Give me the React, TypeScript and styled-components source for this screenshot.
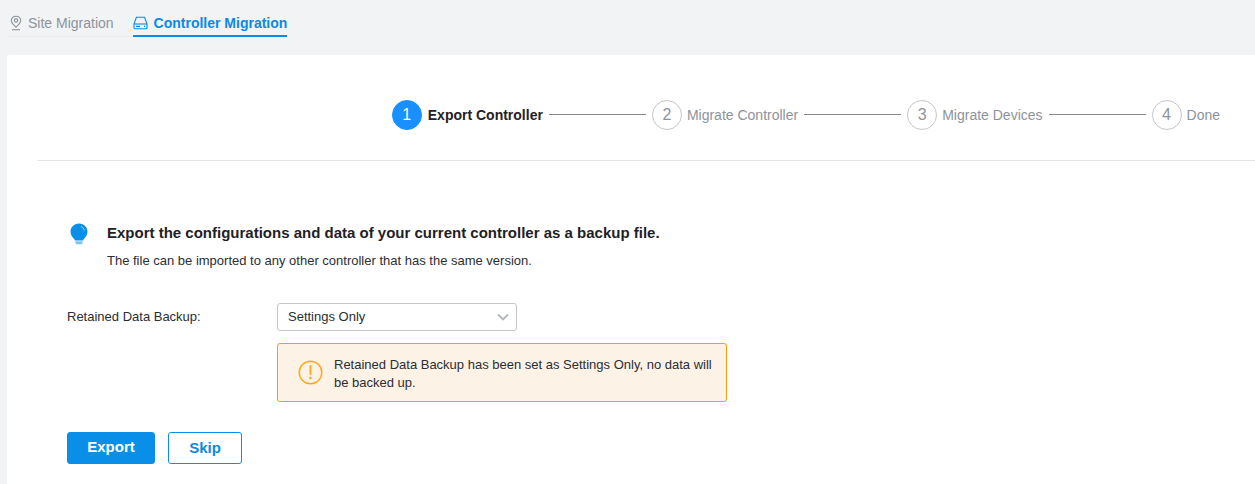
import * as React from 'react';
import styled, { createGlobalStyle } from 'styled-components';

const GlobalStyle = createGlobalStyle`
  html, body {
    margin: 0;
    padding: 0;
    height: 100%;
    overflow: hidden;
    background-color: #f1f3f5;
    font-family: "Liberation Sans", Arial, sans-serif;
  }
`;

const Page = styled.div`
  width: 1255px;
  height: 484px;
  overflow: hidden;
  padding-left: 7px;
  box-sizing: border-box;
`;

const TabBar = styled.nav`
  display: flex;
  height: 37px;
  margin-bottom: 18px;
  align-items: flex-end;
  width: 280px;
  box-shadow: inset 0 -1px 0 #e9ebed;
`;

const Tab = styled.a<{ $active?: boolean }>`
  display: flex;
  flex: none;
  align-items: center;
  gap: ${(p) => (p.$active ? '6px' : '5px')};
  height: 37px;
  box-sizing: border-box;
  padding: 10px 0 0 ${(p) => (p.$active ? '0' : '2px')};
  margin-right: ${(p) => (p.$active ? '0' : '19px')};
  font-size: 14px;
  white-space: nowrap;
  font-weight: ${(p) => (p.$active ? 700 : 400)};
  color: ${(p) => (p.$active ? '#0a8ae6' : '#8d939b')};
  border-bottom: 2px solid ${(p) => (p.$active ? '#0a8fe8' : 'transparent')};
  svg {
    flex: none;
  }
`;

const Card = styled.main`
  background-color: #fff;
  height: 429px;
  padding: 0 0 0 30px;
  border-radius: 2px 0 0 0;
`;

const Stepper = styled.div`
  display: flex;
  align-items: center;
  justify-content: flex-end;
  height: 106px;
  padding: 14px 35px 0 0;
  border-bottom: 1px solid #e3e4e6;
  box-sizing: border-box;
`;

const StepCircle = styled.span<{ $active?: boolean }>`
  width: 30px;
  height: 30px;
  box-sizing: border-box;
  border-radius: 50%;
  display: flex;
  align-items: center;
  justify-content: center;
  font-size: 16px;
  color: ${(p) => (p.$active ? '#fff' : '#8d939b')};
  background-color: ${(p) => (p.$active ? '#1890ff' : '#fff')};
  border: 1px solid ${(p) => (p.$active ? '#1890ff' : '#c4c6c9')};
`;

const StepLabel = styled.span<{ $active?: boolean }>`
  margin-left: ${(p) => (p.$active ? '6px' : '5px')};
  font-size: 14px;
  font-weight: ${(p) => (p.$active ? 700 : 400)};
  color: ${(p) => (p.$active ? '#1f2125' : '#8d939b')};
  white-space: nowrap;
`;

const StepLine = styled.span`
  width: 97px;
  height: 1px;
  margin: 0 6px;
  background-color: #85888c;
`;

const Intro = styled.section`
  display: flex;
  margin: 62px 0 0 30px;
`;

const BulbBox = styled.div`
  width: 37px;
  flex: none;
  padding-left: 3px;
`;

const IntroTitle = styled.h2`
  margin: 0;
  font-size: 15px;
  line-height: 20px;
  font-weight: 700;
  color: #1f2125;
`;

const IntroText = styled.p`
  margin: 10px 0 0;
  font-size: 13px;
  line-height: 16px;
  color: #2b2e33;
`;

const FormRow = styled.div`
  display: flex;
  margin: 34px 0 0 30px;
`;

const FieldLabel = styled.label`
  width: 210px;
  font-size: 13px;
  line-height: 28px;
  color: #2b2e33;
`;

const FieldBody = styled.div`
  display: flex;
  flex-direction: column;
`;

const SelectBox = styled.div`
  width: 240px;
  height: 28px;
  box-sizing: border-box;
  display: flex;
  align-items: center;
  justify-content: space-between;
  padding: 0 7px 2px 10px;
  border: 1px solid #c4c6c9;
  border-radius: 3px;
  font-size: 13px;
  color: #2b2e33;
  svg {
    margin-top: 2px;
  }
`;

const Warning = styled.div`
  width: 450px;
  height: 59px;
  margin-top: 12px;
  box-sizing: border-box;
  display: flex;
  align-items: center;
  gap: 11px;
  padding: 2px 14px 0 20px;
  background-color: #fdf2e6;
  border: 1px solid #ff9d0a;
  border-radius: 3px;
  font-size: 13px;
  line-height: 18px;
  color: #2b2e33;
  svg {
    flex: none;
    margin-top: -2px;
  }
`;

const Actions = styled.div`
  display: flex;
  gap: 13px;
  margin: 30px 0 0 30px;
`;

const Button = styled.button<{ $primary?: boolean }>`
  height: 32px;
  width: ${(p) => (p.$primary ? '88px' : '74px')};
  padding: 0 0 ${(p) => (p.$primary ? '3px' : '2px')};
  box-sizing: border-box;
  font-family: inherit;
  font-size: 15px;
  font-weight: 700;
  border-radius: 3px;
  color: ${(p) => (p.$primary ? '#fff' : '#0a8ae6')};
  background-color: ${(p) => (p.$primary ? '#0a8fe8' : '#fff')};
  border: 1px solid #0a8fe8;
`;

const PinIcon = () => (
  <svg width="14" height="16" viewBox="0 0 14 16" fill="none" stroke="#8d939b" strokeWidth="1.1">
    <path d="M7 1.200c-2.600 0-4.700 1.900-4.700 4.400 0 2.500 2.500 4.600 4.700 6.700 2.200-2.100 4.700-4.200 4.700-6.700C11.700 3.100 9.600 1.200 7 1.200z" />
    <circle cx="7" cy="5.600" r="1.700" />
    <path d="M3 14.700h8" />
  </svg>
);

const DriveIcon = () => (
  <svg width="15" height="14" viewBox="0 0 15 14" fill="none" stroke="#0a8ae6" strokeWidth="1.1">
    <path d="M3.400 1.200h8.200l2.400 6.800v3.700a1 1 0 0 1-1 1H2a1 1 0 0 1-1-1V8z" />
    <path d="M1 8h13" />
    <path d="M3 10.400h4M11 10.400h1.200" />
  </svg>
);

const BulbIcon = () => (
  <svg width="18" height="22" viewBox="0 0 18 22">
    <path d="M9 .5C4 .5.500 4.200.500 8.700c0 3.500 2 5.400 3.600 7.200.5.600.7 1 .8 1.600h8.200c.1-.6.300-1 .8-1.600 1.600-1.800 3.600-3.700 3.600-7.200C17.500 4.200 14 .5 9 .5z" fill="#0a8fe8" />
    <path d="M5.300 18.300h7.400v1.500l-1 1.500H6.300l-1-1.500z" fill="#7cc4f3" />
    <path d="M11 3.500c1.700.7 3 2.300 3.300 4" fill="none" stroke="#a5d7f8" strokeWidth="1" />
  </svg>
);

const AlertIcon = () => (
  <svg width="25" height="25" viewBox="0 0 25 25" fill="none">
    <circle cx="12.500" cy="12.500" r="11.300" stroke="#ffaa1a" strokeWidth="1.500" />
    <path d="M12.500 6v8" stroke="#ffaa1a" strokeWidth="2" strokeLinecap="round" />
    <circle cx="12.500" cy="18" r="1.300" fill="#ffaa1a" />
  </svg>
);

const ChevronIcon = () => (
  <svg width="12" height="8" viewBox="0 0 12 8" fill="none" stroke="#b4b7ba" strokeWidth="1.800">
    <path d="M1 1.500l5 5 5-5" />
  </svg>
);

const steps = ['Export Controller', 'Migrate Controller', 'Migrate Devices', 'Done'];

const App = () => {
  return (
    <Page>
      <GlobalStyle />
      <TabBar>
        <Tab>
          <PinIcon />
          Site Migration
        </Tab>
        <Tab $active>
          <DriveIcon />
          Controller Migration
        </Tab>
      </TabBar>
      <Card>
        <Stepper>
          {steps.map((step, i) => (
            <React.Fragment key={step}>
              <StepCircle $active={i === 0}>{i + 1}</StepCircle>
              <StepLabel $active={i === 0}>{step}</StepLabel>
              {i < steps.length - 1 && <StepLine />}
            </React.Fragment>
          ))}
        </Stepper>
        <Intro>
          <BulbBox>
            <BulbIcon />
          </BulbBox>
          <div>
            <IntroTitle>Export the configurations and data of your current controller as a backup file.</IntroTitle>
            <IntroText>The file can be imported to any other controller that has the same version.</IntroText>
          </div>
        </Intro>
        <FormRow>
          <FieldLabel>Retained Data Backup:</FieldLabel>
          <FieldBody>
            <SelectBox>
              Settings Only
              <ChevronIcon />
            </SelectBox>
            <Warning>
              <AlertIcon />
              <span>Retained Data Backup has been set as Settings Only, no data will be backed up.</span>
            </Warning>
          </FieldBody>
        </FormRow>
        <Actions>
          <Button $primary>Export</Button>
          <Button>Skip</Button>
        </Actions>
      </Card>
    </Page>
  );
};

export default App;
